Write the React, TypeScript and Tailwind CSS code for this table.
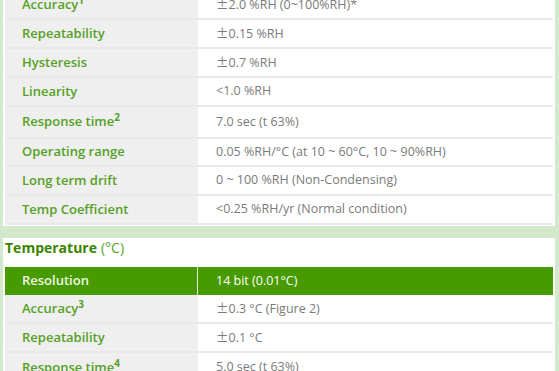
import React from 'react';

interface SpecRow {
    label: string;
    sup?: string;
    value: string;
    h: string;
}

const humidityRows: SpecRow[] = [
    { label: 'Accuracy', sup: '1', value: '±|2.0 %RH (0~100%RH)*', h: 'h-[29px]' },
    { label: 'Repeatability', value: '±|0.15 %RH', h: 'h-[29px]' },
    { label: 'Hysteresis', value: '±|0.7 %RH', h: 'h-[29px]' },
    { label: 'Linearity', value: '<1.0 %RH', h: 'h-[29px]' },
    { label: 'Response time', sup: '2', value: '7.0 sec (t 63%)', h: 'h-[32px]' },
    { label: 'Operating range', value: '0.05 %RH/°C (at 10 ~ 60°C, 10 ~ 90%RH)', h: 'h-[28px]' },
    { label: 'Long term drift', value: '0 ~ 100 %RH (Non-Condensing)', h: 'h-[29px]' },
    { label: 'Temp Coefficient', value: '<0.25 %RH/yr (Normal condition)', h: 'h-[29px]' },
];

const temperatureRows: SpecRow[] = [
    { label: 'Accuracy', sup: '3', value: '±|0.3 °C (Figure 2)', h: 'h-[29px]' },
    { label: 'Repeatability', value: '±|0.1 °C', h: 'h-[29px]' },
    { label: 'Response time', sup: '4', value: '5.0 sec (t 63%)', h: 'h-[31px]' },
];

// values starting with "±|" get a wide plus-minus sign like the original page
const Value: React.FC<{ text: string }> = ({ text }) => {
    if (!text.startsWith('±|')) return <span>{text}</span>;
    return (
        <span>
            <span style={{ fontFamily: '"Noto Sans CJK KR", sans-serif' }}>±</span>
            {text.slice(2)}
        </span>
    );
};

const Row: React.FC<{ row: SpecRow }> = ({ row }) => (
    <div className={`flex ${row.h} border-b-2 border-[#e9e9e9]`}>
        <div className="flex w-[193px] shrink-0 items-center bg-[#efefef] pl-[17px] text-[13px] font-semibold text-[#55a126]">
            <span>
                {row.label}
                {row.sup ? <sup className="text-[10px] font-bold">{row.sup}</sup> : null}
            </span>
        </div>
        <div className="flex flex-1 items-center pl-[18px] text-[12.5px] text-[#7b7b7b]">
            <Value text={row.value} />
        </div>
    </div>
);

const App: React.FC = () => {
    return (
        <div
            className="h-[371px] w-[559px] overflow-hidden bg-[#d2e9cd] pl-[3px] pr-[4px]"
            style={{ fontFamily: '"Open Sans", "Noto Sans", sans-serif' }}
        >
            <div className="-mt-[11px] bg-white px-[2px] pt-[2px] pb-[1px]">
                {humidityRows.map(row => (
                    <Row key={row.label} row={row} />
                ))}
            </div>

            <div className="mt-[12px] bg-white px-[2px]">
                <div className="flex h-[29px] items-start pt-[3px] text-[14px] leading-none">
                    <span className="font-bold text-[#3a8300]">Temperature</span>
                    <span className="ml-[4px] text-[#55a52a]">(°C)</span>
                </div>
                <div className="flex h-[28px] bg-[#479b00] text-white">
                    <div className="flex w-[193px] shrink-0 items-center border-r border-[#dff0cf] pl-[17px] text-[13px] font-semibold text-[#eef7e4]">
                        Resolution
                    </div>
                    <div className="flex flex-1 items-center pl-[18px] text-[12.5px]">14 bit (0.01°C)</div>
                </div>
                {temperatureRows.map(row => (
                    <Row key={row.label} row={row} />
                ))}
            </div>
        </div>
    );
};

export default App;
